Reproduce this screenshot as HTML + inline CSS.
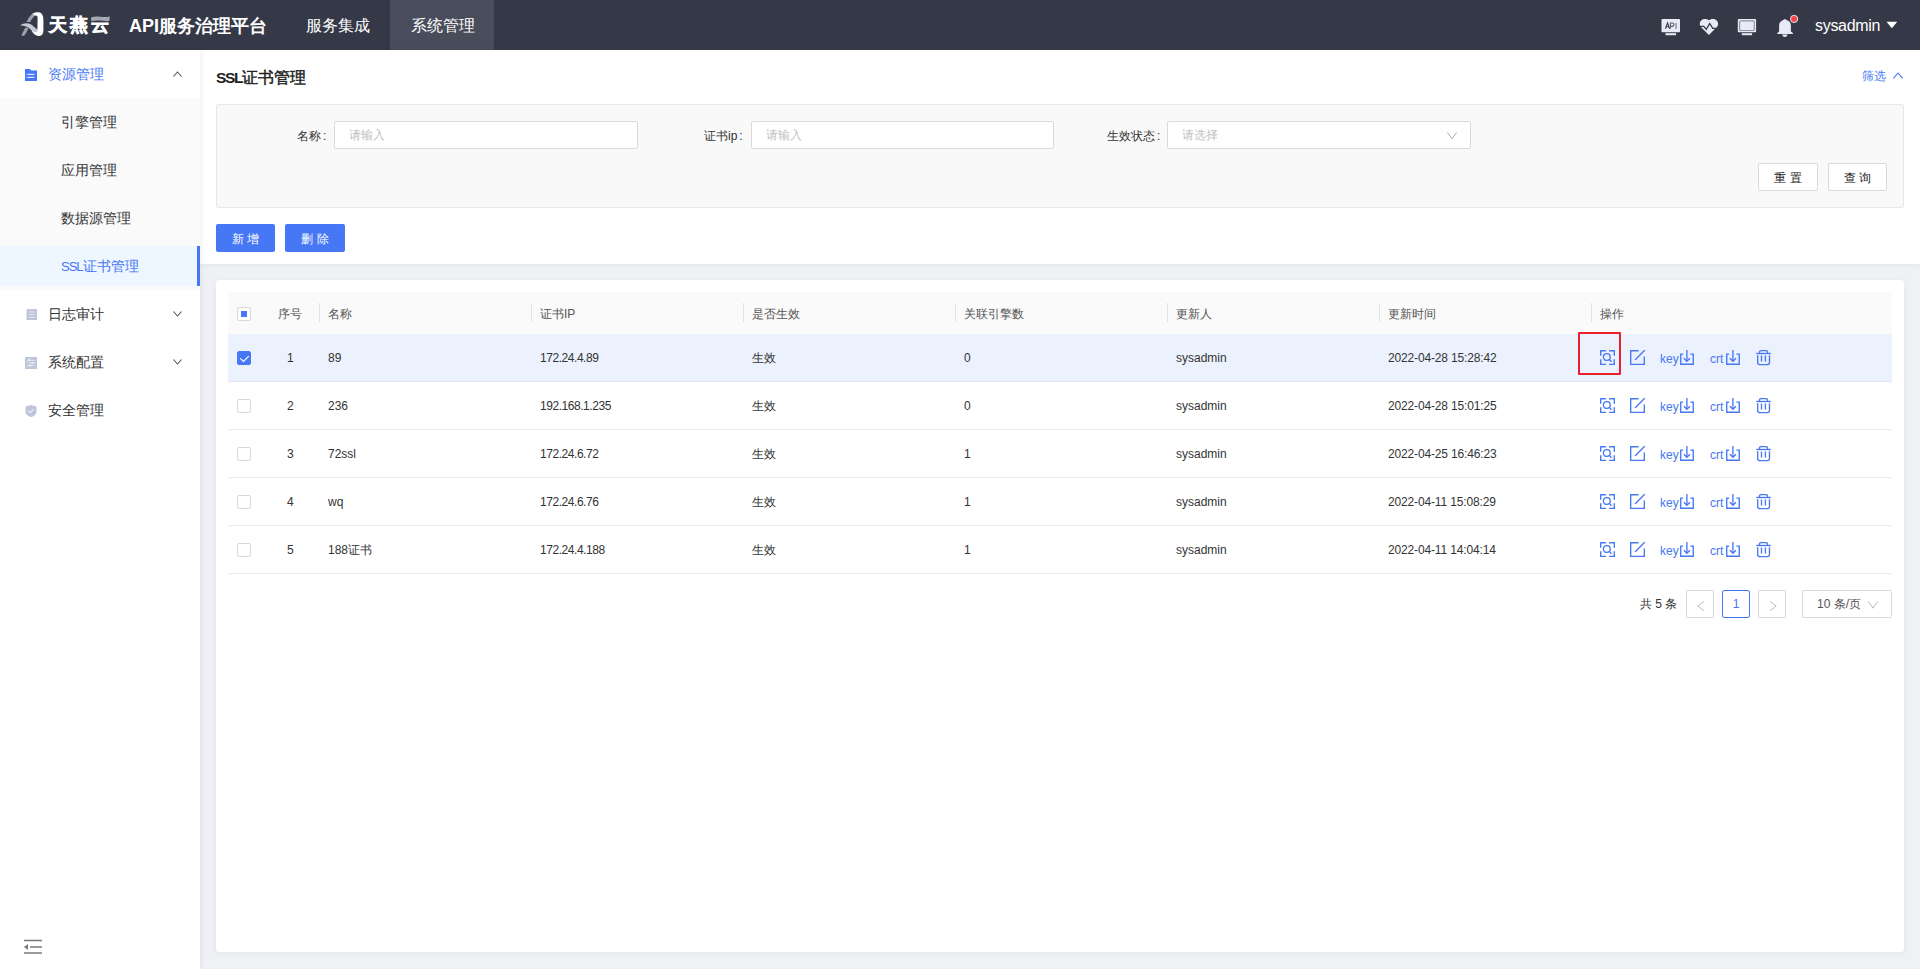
<!DOCTYPE html>
<html><head><meta charset="utf-8">
<style>
*{box-sizing:border-box;margin:0;padding:0}
html,body{width:1920px;height:969px;overflow:hidden;background:#eff1f5;font-family:"Liberation Sans",sans-serif;color:#333}
.abs{position:absolute}
#hdr{position:absolute;left:0;top:0;width:1920px;height:50px;background:#353947}
#hdr .t{position:absolute;white-space:nowrap}
#side{position:absolute;left:0;top:50px;width:200px;height:919px;background:#fff;box-shadow:1px 0 6px rgba(0,0,0,0.07)}
#side .it{position:absolute;left:0;width:200px;height:48px;font-size:14px;line-height:48px;color:#333}
#side .sub{position:absolute;left:0;width:200px;background:#fafafa}
#panel{position:absolute;left:200px;top:50px;width:1720px;height:214px;background:#fff;box-shadow:0 1px 6px rgba(0,0,0,0.06)}
#card{position:absolute;left:216px;top:280px;width:1688px;height:672px;background:#fff;border-radius:3px;box-shadow:0 1px 7px rgba(0,0,0,0.06)}
.inp{position:absolute;height:28px;width:304px;background:#fff;border:1px solid #d9d9d9;border-radius:2px;font-size:12px;line-height:26px;color:#bfbfbf;padding-left:14px}
.lbl{position:absolute;font-size:12px;line-height:28px;color:#333;white-space:nowrap}
.btn{position:absolute;height:28px;border-radius:2px;font-size:12px;line-height:28px;text-align:center;padding-top:1px}
.th{position:absolute;top:293px;height:42px;font-size:12px;line-height:42px;color:#555;white-space:nowrap}
.dv{position:absolute;top:303px;width:1px;height:19px;background:#e4e4e4}
.td{position:absolute;font-size:12px;line-height:48px;color:#333;white-space:nowrap}
.cb{position:absolute;left:237px;width:14px;height:14px;border:1px solid #d9d9d9;border-radius:2px;background:#fff}
.rowline{position:absolute;left:228px;width:1664px;height:1px;background:#ebebeb}
svg{position:absolute;overflow:visible}
.act{color:#4677f5;line-height:48px;padding-top:2px}
</style></head><body>

<div id="hdr">
  <!-- logo -->
  <svg style="left:16px;top:8px" width="32" height="32" viewBox="0 0 32 32">
    <path d="M10.6 14 L14.2 14 C15.6 11.5 17.3 8.8 19.2 7.6 L16.6 5.6 C14 7.6 12 10.5 10.6 14 Z" fill="#9da0ae"/>
    <path d="M16.4 5.8 C18 4.3 20.5 3.9 23 4.3 C26 5 27.4 7.6 27.4 11.5 L27.4 22.5 C27.4 26.2 25.4 28 22.6 28 C19.6 28 17.6 25.6 15.6 23 L21.4 21.6 L21.6 9.8 C21.6 7.6 20.3 7.1 18.8 7.7 Z" fill="#ffffff"/>
    <path d="M4 17.6 C7 15.2 11 14.6 14.2 16 C17.2 17.4 19.6 20.4 21.6 21.8 L21.6 23.8 C19.6 24.4 17.4 24.2 15.6 22.6 C13.2 20.2 10.6 17.6 4 17.6 Z" fill="#c4c7d4"/>
    <path d="M5.2 27.8 L9.2 19.8 L12.6 19.8 C11.2 23 9.8 25.8 8.2 27.8 Z" fill="#9da0ae"/>
  </svg>
  <div class="t" style="left:49px;top:12px;font-size:18px;line-height:26px;font-weight:bold;color:#fff;letter-spacing:3px;-webkit-text-stroke:0.6px #fff">天燕云</div>
  <svg style="left:90.5px;top:15.5px" width="19" height="6" viewBox="0 0 19 6"><path d="M0.2 1.2C4 0.2 9 0.4 12 1C14.5 1.5 16.5 1 18.6 0.2V4.8C16.5 5.4 14 5.2 11.5 4.8C8 4.3 4 4.3 0.2 5.2Z" fill="#a3a6b4"/></svg>
  <div class="t" style="left:129px;top:13px;font-size:18px;line-height:26px;font-weight:bold;color:#fff">API服务治理平台</div>
  <div class="t" style="left:306px;top:14px;font-size:16px;line-height:24px;color:#fff">服务集成</div>
  <div class="abs" style="left:390px;top:0;width:104px;height:50px;background:#494c5a"></div>
  <div class="t" style="left:411px;top:14px;font-size:16px;line-height:24px;color:#fff">系统管理</div>
  <div class="t" style="left:1815px;top:14px;font-size:16px;line-height:24px;color:#fff;letter-spacing:-0.3px">sysadmin</div>
</div>

<div id="panel"></div>
<div id="side">
  <div class="it" style="top:0;left:48px;width:152px;color:#4677f5">资源管理</div>
  <div class="sub" style="top:48px;height:192px"></div>
  <div class="abs" style="left:0;top:196px;width:200px;height:40px;background:#eef6ff"></div>
  <div class="abs" style="left:197px;top:196px;width:3px;height:40px;background:#4677f5"></div>
  <div class="it" style="top:48px;left:61px;width:139px">引擎管理</div>
  <div class="it" style="top:96px;left:61px;width:139px">应用管理</div>
  <div class="it" style="top:144px;left:61px;width:139px">数据源管理</div>
  <div class="it" style="top:192px;left:61px;width:139px;color:#4677f5"><span style="font-size:13px;letter-spacing:-1px">SSL</span>证书管理</div>
  <div class="it" style="top:240px;left:48px;width:152px">日志审计</div>
  <div class="it" style="top:288px;left:48px;width:152px">系统配置</div>
  <div class="it" style="top:336px;left:48px;width:152px">安全管理</div>
</div>

<!-- title -->
<div class="abs" style="left:216px;top:65px;font-size:16px;line-height:26px;color:#222"><span style="font-size:15.5px;letter-spacing:-1.3px;font-weight:bold">SSL</span><span style="-webkit-text-stroke:0.45px #222">证书管理</span></div>
<div class="abs" style="left:1862px;top:65px;font-size:12px;line-height:22px;color:#4677f5">筛选</div>

<!-- filter box -->
<div class="abs" style="left:216px;top:104px;width:1688px;height:104px;background:#f9f9f9;border:1px solid #e8e8e8;border-radius:2px"></div>
<div class="lbl" style="left:297px;top:122px">名称<span style="margin-left:2px">:</span></div>
<div class="inp" style="left:334px;top:121px">请输入</div>
<div class="lbl" style="left:704px;top:122px">证书ip<span style="margin-left:2px">:</span></div>
<div class="inp" style="left:751px;top:121px;width:303px">请输入</div>
<div class="lbl" style="left:1107px;top:122px">生效状态<span style="margin-left:2px">:</span></div>
<div class="inp" style="left:1167px;top:121px">请选择</div>
<div class="btn" style="left:1758px;top:163px;width:60px;border:1px solid #d9d9d9;background:#fff;color:#222;line-height:26px">重 置</div>
<div class="btn" style="left:1828px;top:163px;width:59px;border:1px solid #d9d9d9;background:#fff;color:#222;line-height:26px">查 询</div>

<div class="btn" style="left:216px;top:224px;width:59px;background:#4677f5;color:#fff">新 增</div>
<div class="btn" style="left:285px;top:224px;width:60px;background:#4677f5;color:#fff">删 除</div>

<!-- card -->
<div id="card"></div>
<div class="abs" style="left:228px;top:292px;width:1664px;height:42px;background:#fafafa"></div>
<div class="abs" style="left:228px;top:334px;width:1664px;height:48px;background:#ebf1fd"></div>

<div class="th" style="left:278px">序号</div>
<div class="th" style="left:328px">名称</div>
<div class="th" style="left:540px">证书IP</div>
<div class="th" style="left:752px">是否生效</div>
<div class="th" style="left:964px">关联引擎数</div>
<div class="th" style="left:1176px">更新人</div>
<div class="th" style="left:1388px">更新时间</div>
<div class="th" style="left:1600px">操作</div>
<div class="dv" style="left:319px"></div>
<div class="dv" style="left:531px"></div>
<div class="dv" style="left:743px"></div>
<div class="dv" style="left:955px"></div>
<div class="dv" style="left:1167px"></div>
<div class="dv" style="left:1379px"></div>
<div class="dv" style="left:1591px"></div>

<!--ROWS-->
<div class="td" style="left:287px;top:334px">1</div>
<div class="td" style="left:328px;top:334px;">89</div>
<div class="td" style="left:540px;top:334px;letter-spacing:-0.45px;">172.24.4.89</div>
<div class="td" style="left:752px;top:334px;">生效</div>
<div class="td" style="left:964px;top:334px;">0</div>
<div class="td" style="left:1176px;top:334px;">sysadmin</div>
<div class="td" style="left:1388px;top:334px;letter-spacing:-0.15px;">2022-04-28 15:28:42</div>
<svg style="left:1600px;top:350px" width="15" height="15" viewBox="0 0 15 15" fill="none" stroke="#4677f5" stroke-width="1.35">
<path d="M0.7 5.8V0.7H5.9M9.1 0.7H14.3V5.8M14.3 9.2V14.3H9.1M5.9 14.3H0.7V9.2"/>
<circle cx="6.8" cy="7" r="3.4"/><path d="M9.3 9.5L11.5 11.7"/></svg>
<svg style="left:1630px;top:350px" width="15" height="15" viewBox="0 0 15 15" fill="none" stroke="#4677f5" stroke-width="1.35">
<path d="M8.6 0.7H0.7V14.3H14.3V6.6"/><path d="M5.5 9.5L14.4 0.6" stroke-linecap="round"/></svg>
<div class="td act" style="left:1660px;top:333px">key</div>
<svg style="left:1680px;top:350px" width="14" height="15" viewBox="0 0 14 15" fill="none" stroke="#4677f5" stroke-width="1.35">
<path d="M3.2 4.1H0.75V14.25H13.25V4.1H10.4"/><path d="M6.9 0V11"/><path d="M3.8 8.2L6.9 11.2L10 8.2"/></svg>
<div class="td act" style="left:1710px;top:333px">crt</div>
<svg style="left:1726px;top:350px" width="14" height="15" viewBox="0 0 14 15" fill="none" stroke="#4677f5" stroke-width="1.35">
<path d="M3.2 4.1H0.75V14.25H13.25V4.1H10.4"/><path d="M6.9 0V11"/><path d="M3.8 8.2L6.9 11.2L10 8.2"/></svg>
<svg style="left:1756px;top:350px" width="15" height="15" viewBox="0 0 15 15" fill="none" stroke="#4677f5" stroke-width="1.35">
<path d="M0.2 3.5H14.8"/><path d="M3.5 3.5V2.2C3.5 1.2 4.2 0.6 5 0.6H10C10.9 0.6 11.6 1.2 11.6 2.2V3.5"/>
<path d="M1.7 5.2V12.5C1.7 13.8 2.6 14.6 3.8 14.6H11.4C12.7 14.6 13.5 13.8 13.5 12.5V5.2"/><path d="M5.5 5.4V11.4M9.4 5.4V11.4"/></svg>
<div class="rowline" style="top:381px;background:#e1e6f2"></div>
<div class="cb" style="top:399px"></div>
<div class="td" style="left:287px;top:382px">2</div>
<div class="td" style="left:328px;top:382px;">236</div>
<div class="td" style="left:540px;top:382px;letter-spacing:-0.45px;">192.168.1.235</div>
<div class="td" style="left:752px;top:382px;">生效</div>
<div class="td" style="left:964px;top:382px;">0</div>
<div class="td" style="left:1176px;top:382px;">sysadmin</div>
<div class="td" style="left:1388px;top:382px;letter-spacing:-0.15px;">2022-04-28 15:01:25</div>
<svg style="left:1600px;top:398px" width="15" height="15" viewBox="0 0 15 15" fill="none" stroke="#4677f5" stroke-width="1.35">
<path d="M0.7 5.8V0.7H5.9M9.1 0.7H14.3V5.8M14.3 9.2V14.3H9.1M5.9 14.3H0.7V9.2"/>
<circle cx="6.8" cy="7" r="3.4"/><path d="M9.3 9.5L11.5 11.7"/></svg>
<svg style="left:1630px;top:398px" width="15" height="15" viewBox="0 0 15 15" fill="none" stroke="#4677f5" stroke-width="1.35">
<path d="M8.6 0.7H0.7V14.3H14.3V6.6"/><path d="M5.5 9.5L14.4 0.6" stroke-linecap="round"/></svg>
<div class="td act" style="left:1660px;top:381px">key</div>
<svg style="left:1680px;top:398px" width="14" height="15" viewBox="0 0 14 15" fill="none" stroke="#4677f5" stroke-width="1.35">
<path d="M3.2 4.1H0.75V14.25H13.25V4.1H10.4"/><path d="M6.9 0V11"/><path d="M3.8 8.2L6.9 11.2L10 8.2"/></svg>
<div class="td act" style="left:1710px;top:381px">crt</div>
<svg style="left:1726px;top:398px" width="14" height="15" viewBox="0 0 14 15" fill="none" stroke="#4677f5" stroke-width="1.35">
<path d="M3.2 4.1H0.75V14.25H13.25V4.1H10.4"/><path d="M6.9 0V11"/><path d="M3.8 8.2L6.9 11.2L10 8.2"/></svg>
<svg style="left:1756px;top:398px" width="15" height="15" viewBox="0 0 15 15" fill="none" stroke="#4677f5" stroke-width="1.35">
<path d="M0.2 3.5H14.8"/><path d="M3.5 3.5V2.2C3.5 1.2 4.2 0.6 5 0.6H10C10.9 0.6 11.6 1.2 11.6 2.2V3.5"/>
<path d="M1.7 5.2V12.5C1.7 13.8 2.6 14.6 3.8 14.6H11.4C12.7 14.6 13.5 13.8 13.5 12.5V5.2"/><path d="M5.5 5.4V11.4M9.4 5.4V11.4"/></svg>
<div class="rowline" style="top:429px;"></div>
<div class="cb" style="top:447px"></div>
<div class="td" style="left:287px;top:430px">3</div>
<div class="td" style="left:328px;top:430px;">72ssl</div>
<div class="td" style="left:540px;top:430px;letter-spacing:-0.45px;">172.24.6.72</div>
<div class="td" style="left:752px;top:430px;">生效</div>
<div class="td" style="left:964px;top:430px;">1</div>
<div class="td" style="left:1176px;top:430px;">sysadmin</div>
<div class="td" style="left:1388px;top:430px;letter-spacing:-0.15px;">2022-04-25 16:46:23</div>
<svg style="left:1600px;top:446px" width="15" height="15" viewBox="0 0 15 15" fill="none" stroke="#4677f5" stroke-width="1.35">
<path d="M0.7 5.8V0.7H5.9M9.1 0.7H14.3V5.8M14.3 9.2V14.3H9.1M5.9 14.3H0.7V9.2"/>
<circle cx="6.8" cy="7" r="3.4"/><path d="M9.3 9.5L11.5 11.7"/></svg>
<svg style="left:1630px;top:446px" width="15" height="15" viewBox="0 0 15 15" fill="none" stroke="#4677f5" stroke-width="1.35">
<path d="M8.6 0.7H0.7V14.3H14.3V6.6"/><path d="M5.5 9.5L14.4 0.6" stroke-linecap="round"/></svg>
<div class="td act" style="left:1660px;top:429px">key</div>
<svg style="left:1680px;top:446px" width="14" height="15" viewBox="0 0 14 15" fill="none" stroke="#4677f5" stroke-width="1.35">
<path d="M3.2 4.1H0.75V14.25H13.25V4.1H10.4"/><path d="M6.9 0V11"/><path d="M3.8 8.2L6.9 11.2L10 8.2"/></svg>
<div class="td act" style="left:1710px;top:429px">crt</div>
<svg style="left:1726px;top:446px" width="14" height="15" viewBox="0 0 14 15" fill="none" stroke="#4677f5" stroke-width="1.35">
<path d="M3.2 4.1H0.75V14.25H13.25V4.1H10.4"/><path d="M6.9 0V11"/><path d="M3.8 8.2L6.9 11.2L10 8.2"/></svg>
<svg style="left:1756px;top:446px" width="15" height="15" viewBox="0 0 15 15" fill="none" stroke="#4677f5" stroke-width="1.35">
<path d="M0.2 3.5H14.8"/><path d="M3.5 3.5V2.2C3.5 1.2 4.2 0.6 5 0.6H10C10.9 0.6 11.6 1.2 11.6 2.2V3.5"/>
<path d="M1.7 5.2V12.5C1.7 13.8 2.6 14.6 3.8 14.6H11.4C12.7 14.6 13.5 13.8 13.5 12.5V5.2"/><path d="M5.5 5.4V11.4M9.4 5.4V11.4"/></svg>
<div class="rowline" style="top:477px;"></div>
<div class="cb" style="top:495px"></div>
<div class="td" style="left:287px;top:478px">4</div>
<div class="td" style="left:328px;top:478px;">wq</div>
<div class="td" style="left:540px;top:478px;letter-spacing:-0.45px;">172.24.6.76</div>
<div class="td" style="left:752px;top:478px;">生效</div>
<div class="td" style="left:964px;top:478px;">1</div>
<div class="td" style="left:1176px;top:478px;">sysadmin</div>
<div class="td" style="left:1388px;top:478px;letter-spacing:-0.15px;">2022-04-11 15:08:29</div>
<svg style="left:1600px;top:494px" width="15" height="15" viewBox="0 0 15 15" fill="none" stroke="#4677f5" stroke-width="1.35">
<path d="M0.7 5.8V0.7H5.9M9.1 0.7H14.3V5.8M14.3 9.2V14.3H9.1M5.9 14.3H0.7V9.2"/>
<circle cx="6.8" cy="7" r="3.4"/><path d="M9.3 9.5L11.5 11.7"/></svg>
<svg style="left:1630px;top:494px" width="15" height="15" viewBox="0 0 15 15" fill="none" stroke="#4677f5" stroke-width="1.35">
<path d="M8.6 0.7H0.7V14.3H14.3V6.6"/><path d="M5.5 9.5L14.4 0.6" stroke-linecap="round"/></svg>
<div class="td act" style="left:1660px;top:477px">key</div>
<svg style="left:1680px;top:494px" width="14" height="15" viewBox="0 0 14 15" fill="none" stroke="#4677f5" stroke-width="1.35">
<path d="M3.2 4.1H0.75V14.25H13.25V4.1H10.4"/><path d="M6.9 0V11"/><path d="M3.8 8.2L6.9 11.2L10 8.2"/></svg>
<div class="td act" style="left:1710px;top:477px">crt</div>
<svg style="left:1726px;top:494px" width="14" height="15" viewBox="0 0 14 15" fill="none" stroke="#4677f5" stroke-width="1.35">
<path d="M3.2 4.1H0.75V14.25H13.25V4.1H10.4"/><path d="M6.9 0V11"/><path d="M3.8 8.2L6.9 11.2L10 8.2"/></svg>
<svg style="left:1756px;top:494px" width="15" height="15" viewBox="0 0 15 15" fill="none" stroke="#4677f5" stroke-width="1.35">
<path d="M0.2 3.5H14.8"/><path d="M3.5 3.5V2.2C3.5 1.2 4.2 0.6 5 0.6H10C10.9 0.6 11.6 1.2 11.6 2.2V3.5"/>
<path d="M1.7 5.2V12.5C1.7 13.8 2.6 14.6 3.8 14.6H11.4C12.7 14.6 13.5 13.8 13.5 12.5V5.2"/><path d="M5.5 5.4V11.4M9.4 5.4V11.4"/></svg>
<div class="rowline" style="top:525px;"></div>
<div class="cb" style="top:543px"></div>
<div class="td" style="left:287px;top:526px">5</div>
<div class="td" style="left:328px;top:526px;">188证书</div>
<div class="td" style="left:540px;top:526px;letter-spacing:-0.45px;">172.24.4.188</div>
<div class="td" style="left:752px;top:526px;">生效</div>
<div class="td" style="left:964px;top:526px;">1</div>
<div class="td" style="left:1176px;top:526px;">sysadmin</div>
<div class="td" style="left:1388px;top:526px;letter-spacing:-0.15px;">2022-04-11 14:04:14</div>
<svg style="left:1600px;top:542px" width="15" height="15" viewBox="0 0 15 15" fill="none" stroke="#4677f5" stroke-width="1.35">
<path d="M0.7 5.8V0.7H5.9M9.1 0.7H14.3V5.8M14.3 9.2V14.3H9.1M5.9 14.3H0.7V9.2"/>
<circle cx="6.8" cy="7" r="3.4"/><path d="M9.3 9.5L11.5 11.7"/></svg>
<svg style="left:1630px;top:542px" width="15" height="15" viewBox="0 0 15 15" fill="none" stroke="#4677f5" stroke-width="1.35">
<path d="M8.6 0.7H0.7V14.3H14.3V6.6"/><path d="M5.5 9.5L14.4 0.6" stroke-linecap="round"/></svg>
<div class="td act" style="left:1660px;top:525px">key</div>
<svg style="left:1680px;top:542px" width="14" height="15" viewBox="0 0 14 15" fill="none" stroke="#4677f5" stroke-width="1.35">
<path d="M3.2 4.1H0.75V14.25H13.25V4.1H10.4"/><path d="M6.9 0V11"/><path d="M3.8 8.2L6.9 11.2L10 8.2"/></svg>
<div class="td act" style="left:1710px;top:525px">crt</div>
<svg style="left:1726px;top:542px" width="14" height="15" viewBox="0 0 14 15" fill="none" stroke="#4677f5" stroke-width="1.35">
<path d="M3.2 4.1H0.75V14.25H13.25V4.1H10.4"/><path d="M6.9 0V11"/><path d="M3.8 8.2L6.9 11.2L10 8.2"/></svg>
<svg style="left:1756px;top:542px" width="15" height="15" viewBox="0 0 15 15" fill="none" stroke="#4677f5" stroke-width="1.35">
<path d="M0.2 3.5H14.8"/><path d="M3.5 3.5V2.2C3.5 1.2 4.2 0.6 5 0.6H10C10.9 0.6 11.6 1.2 11.6 2.2V3.5"/>
<path d="M1.7 5.2V12.5C1.7 13.8 2.6 14.6 3.8 14.6H11.4C12.7 14.6 13.5 13.8 13.5 12.5V5.2"/><path d="M5.5 5.4V11.4M9.4 5.4V11.4"/></svg>
<div class="rowline" style="top:573px;"></div>
<!--/ROWS-->


<!-- checkboxes -->
<div class="cb" style="top:307px"><div class="abs" style="left:3px;top:3px;width:6px;height:6px;background:#4677f5"></div></div>
<div class="cb" style="top:351px;background:#4677f5;border-color:#4677f5"><svg style="left:1px;top:2px" width="10" height="8" viewBox="0 0 10 8" fill="none" stroke="#fff" stroke-width="1.15"><path d="M1.3 4.4L4.5 7.5L9.8 2.2"/></svg></div>
<!-- red highlight -->
<div class="abs" style="left:1578px;top:332px;width:43px;height:43px;border:2px solid #e8202a;border-radius:1px"></div>

<!-- pagination -->
<div class="abs" style="left:1640px;top:590px;font-size:12px;line-height:28px;color:#333;white-space:nowrap">共 5 条</div>
<div class="abs" style="left:1686px;top:590px;width:28px;height:28px;border:1px solid #d9d9d9;border-radius:2px;background:#fff"><svg style="left:9.5px;top:10px" width="8" height="10" viewBox="0 0 8 10" fill="none" stroke="#bbb" stroke-width="1"><path d="M7 0.4L0.8 5L7 9.6"/></svg></div>
<div class="abs" style="left:1722px;top:590px;width:28px;height:28px;border:1px solid #4677f5;border-radius:2px;background:#fff;font-size:12px;line-height:26px;text-align:center;color:#4677f5">1</div>
<div class="abs" style="left:1758px;top:590px;width:28px;height:28px;border:1px solid #d9d9d9;border-radius:2px;background:#fff"><svg style="left:10px;top:10px" width="8" height="10" viewBox="0 0 8 10" fill="none" stroke="#bbb" stroke-width="1"><path d="M1 0.4L7.2 5L1 9.6"/></svg></div>
<div class="abs" style="left:1802px;top:590px;width:90px;height:28px;border:1px solid #d9d9d9;border-radius:2px;background:#fff;font-size:12px;line-height:26px;color:#555;padding-left:14px;white-space:nowrap">10 条/页</div>
<svg style="left:1868px;top:601px" width="10" height="8" viewBox="0 0 10 8" fill="none" stroke="#bbb" stroke-width="1"><path d="M0.4 0.4L5 7.2L9.6 0.4"/></svg>

<!-- filter select arrow -->
<svg style="left:1447px;top:132px" width="10" height="8" viewBox="0 0 10 8" fill="none" stroke="#aaa" stroke-width="1"><path d="M0.4 0.4L5 6.6L9.6 0.4"/></svg>
<!-- 筛选 arrow -->
<svg style="left:1893px;top:72px" width="10" height="7" viewBox="0 0 10 7" fill="none" stroke="#4677f5" stroke-width="1.1"><path d="M0.4 6.4L5 1L9.6 6.4"/></svg>

<!-- sidebar icons -->
<svg style="left:25px;top:69px" width="12" height="12" viewBox="0 0 12 12"><path d="M0 0H5L6 1.5H12V12H0Z" fill="#4677f5"/><path d="M2.5 5.3H9.5M2.5 8.3H9.5" stroke="#fff" stroke-width="1"/><path d="M1.5 5.3H2M1.5 8.3H2" stroke="#fff" stroke-width="1"/></svg>
<svg style="left:173px;top:71px" width="9" height="6" viewBox="0 0 9 6" fill="none" stroke="#555" stroke-width="1.1"><path d="M0.5 5.5L4.5 1L8.5 5.5"/></svg>
<svg style="left:173px;top:311px" width="9" height="6" viewBox="0 0 9 6" fill="none" stroke="#555" stroke-width="1.1"><path d="M0.5 0.5L4.5 5L8.5 0.5"/></svg>
<svg style="left:173px;top:359px" width="9" height="6" viewBox="0 0 9 6" fill="none" stroke="#555" stroke-width="1.1"><path d="M0.5 0.5L4.5 5L8.5 0.5"/></svg>
<svg style="left:26px;top:309px" width="11" height="11" viewBox="0 0 11 11"><rect x="0.5" y="0" width="10.5" height="11" fill="#bdc6da"/><path d="M3.4 3H8.6M3.4 5.6H8.6M3.4 8.4H8.6" stroke="#e3e8f1" stroke-width="1"/><circle cx="0.6" cy="2.8" r="0.9" fill="#e3e8f1"/><circle cx="0.6" cy="8" r="0.9" fill="#e3e8f1"/></svg>
<svg style="left:25px;top:357px" width="12" height="12" viewBox="0 0 12 12"><rect x="0" y="0" width="12" height="12" fill="#bdc6da"/><path d="M2 3.3H10M2 5.9H10M2 8.6H10" stroke="#e3e8f1" stroke-width="0.9"/><circle cx="4.2" cy="3.1" r="1.1" fill="#eef1f7"/><circle cx="7.6" cy="5.9" r="1.1" fill="#eef1f7"/><circle cx="5.4" cy="8.6" r="1.1" fill="#eef1f7"/></svg>
<svg style="left:25px;top:405px" width="12" height="12" viewBox="0 0 12 12"><path d="M6 0L11.5 1.6V6.5C11.5 9.3 9 11.2 6 12C3 11.2 0.5 9.3 0.5 6.5V1.6Z" fill="#bdc6da"/><path d="M3.2 5.8L5.3 7.7L8.6 4.3" fill="none" stroke="#fff" stroke-width="1"/></svg>
<!-- collapse icon -->
<svg style="left:24px;top:939px" width="18" height="15" viewBox="0 0 18 15"><path d="M0 1.5H18M6 8H18M0 14H18" stroke="#7a7a7a" stroke-width="1.4"/><path d="M0 8L4 5V11Z" fill="#7a7a7a"/></svg>

<!-- header icons -->
<svg style="left:1661px;top:18px" width="20" height="18" viewBox="0 0 20 18"><rect x="0.5" y="1" width="18.5" height="13.3" rx="1" fill="#e8ebf5"/><rect x="4.5" y="15.2" width="10.5" height="2" fill="#e8ebf5"/><path d="M4.4 10.7L6.5 4.9L8.6 10.7M5.2 8.7H7.8" fill="none" stroke="#3a3d4b" stroke-width="1.1"/><path d="M9.4 10.7V5H11.2C12.4 5 13 5.7 13 6.7C13 7.7 12.4 8.4 11.2 8.4H9.4" fill="none" stroke="#5a5d6a" stroke-width="1.1"/><path d="M15.1 4.9V10.7" stroke="#8a8d98" stroke-width="1.4"/></svg>
<svg style="left:1697px;top:16px" width="24" height="22" viewBox="0 0 24 22"><path d="M11.9 4.2C10.8 3.1 9.4 2.9 7.6 2.9C4.8 2.9 2.8 5.2 2.8 8C2.8 9.3 3.2 10.3 3.9 11.1L11.9 19.1L19.2 11.8C20.4 10.6 21.1 9.4 21.1 8C21.1 5.2 19 2.9 16.3 2.9C14.5 2.9 13 3.1 11.9 4.2Z" fill="#e8ebf5"/><path d="M2.4 10.4H6.8L9.3 13.4L12.7 7.5L15.7 12.4H21.6" fill="none" stroke="#353947" stroke-width="1.3" stroke-linejoin="miter"/></svg>
<svg style="left:1737px;top:18px" width="20" height="18" viewBox="0 0 20 18"><rect x="0.8" y="1" width="18.3" height="13.3" rx="1" fill="#e8ebf5"/><rect x="2.6" y="2.9" width="14.7" height="9.6" rx="1" fill="#e8ebf5" stroke="#8d92a3" stroke-width="1.2"/><rect x="4.8" y="15.2" width="10.3" height="2" fill="#e8ebf5"/></svg>
<svg style="left:1776px;top:18px" width="18" height="20" viewBox="0 0 18 20"><path d="M8.85 0.9C7.6 1.3 6.6 2.2 5.6 3C4 4.1 3.1 5.3 3.1 7.3V13.6L1.3 15.1V16H16.9V15.1L14.9 13.6V7.3C14.9 5.3 14 4.1 12.4 3C11.2 2.2 10.1 1.3 8.85 0.9Z" fill="#e8ebf5"/><path d="M6.3 16.6H11.4C11.4 18 10.3 18.9 8.85 18.9C7.4 18.9 6.3 18 6.3 16.6Z" fill="#e8ebf5"/></svg>
<svg style="left:1789px;top:14px" width="10" height="10" viewBox="0 0 10 10"><circle cx="5.1" cy="4.95" r="3.6" fill="#f5454a" stroke="#eef0f6" stroke-width="0.9"/></svg>
<svg style="left:1886px;top:21px" width="12" height="8" viewBox="0 0 12 8"><path d="M0.5 0.8H11.2L5.85 7.2Z" fill="#fff"/></svg>

</body></html>
